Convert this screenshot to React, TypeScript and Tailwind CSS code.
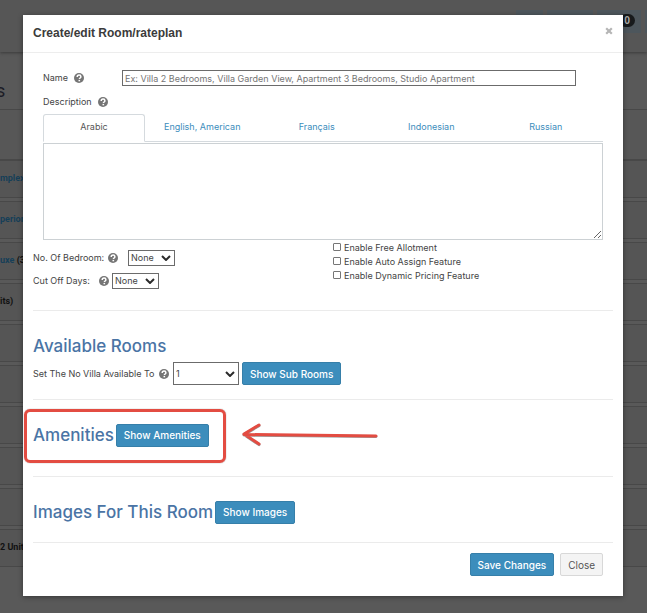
import { useState, type ReactNode } from "react";
import clsx from "clsx";

const languages = ["Arabic", "English, American", "Français", "Indonesian", "Russian"];

const features = [
    "Enable Free Allotment",
    "Enable Auto Assign Feature",
    "Enable Dynamic Pricing Feature",
];

const rows = [
    { link: "mplex" },
    { link: "perior" },
    { link: "uxe", note: " (3" },
    { note: "its)" },
    {},
    {},
    {},
    {},
    {},
    { note: "2 Unit" },
];

const HelpIcon = () => (
    <svg viewBox="0 0 10 10" className="size-[10px] shrink-0" aria-hidden="true">
        <circle cx="5" cy="5" r="5" fill="#757575" />
        <path d="M3.2 4C3.2 2.7 4 2.1 5.1 2.1c1 0 1.8.6 1.8 1.6 0 1.2-1.5 1.3-1.5 2.4" fill="none" stroke="#fff" strokeWidth="1.5" />
        <rect x="4.5" y="6.9" width="1.6" height="1.4" fill="#fff" />
    </svg>
);

interface SelectProps {
    id: string;
    value: string;
    className?: string;
}

const Select = ({ id, value, className }: SelectProps) => (
    <span className={clsx("relative inline-flex", className)}>
        <select id={id} className="w-full appearance-none border border-[#6b6b6b] bg-white pl-[2px] text-[9px] text-[#444]">
            <option>{value}</option>
        </select>
        <svg viewBox="0 0 10 6" className="pointer-events-none absolute right-1 top-1/2 h-[6px] w-[10px] -translate-y-1/2" aria-hidden="true">
            <path d="M1 1l4 4 4-4" fill="none" stroke="#2b2b2b" strokeWidth="2" />
        </svg>
    </span>
);

const PrimaryButton = ({ children, className }: { children: ReactNode; className?: string }) => (
    <button type="button" className={clsx("flex items-center justify-center whitespace-nowrap rounded-[2px] border border-[#367fa9] bg-[#3c8dbc] px-[7px] text-[10px] font-medium text-white", className)}>
        {children}
    </button>
);

const Heading = ({ children }: { children: ReactNode }) => (
    <h2 className="whitespace-nowrap text-[17px] leading-6 font-medium text-[#4a74a5]">{children}</h2>
);

const Backdrop = () => (
    <div className="min-h-screen bg-[#595959] font-[Roboto,sans-serif]" aria-hidden="true">
        <div className="flex h-[52px] justify-end gap-1 bg-[#565656] pt-[10px] shadow-[0_1px_3px_#3b3b3b]">
            <div className="h-[23px] w-[27px] bg-[#4d565c]" />
            <div className="h-[23px] w-[46px] bg-[#4d565c]" />
            <div className="flex h-[23px] w-[44px] items-start justify-end bg-[#4d565c] pr-[6px] pt-1">
                <span className="w-4 rounded-full bg-[#171a1c] text-center text-[10px] leading-[13px] font-bold text-[#aaa]">0</span>
            </div>
            <div className="h-[23px] w-[2px] bg-[#4d565c]" />
        </div>
        <div className="flex h-[57px] items-center pt-5 text-[18px] text-[#1c1c26]">
            <span className="-ml-1">s</span>
        </div>
        <div className="h-[51px] border-y border-[#484848] bg-[#575757]" />
        <div className="flex flex-col gap-[3px]">
            {rows.map((row, i) => (
                <div key={i} className="flex h-[38px] items-center whitespace-pre border-y border-[#484848] bg-[#555] text-[9px] font-bold text-[#111]">
                    {row.link && <span className="text-[#163f58]">{row.link}</span>}
                    {row.note}
                </div>
            ))}
        </div>
    </div>
);

const App = () => {
    const [active, setActive] = useState("Arabic");

    return (
        <div className="relative min-h-screen">
            <div className="absolute inset-0 overflow-hidden">
                <Backdrop />
            </div>
            <div className="relative py-[15px] pl-[23px] pr-6 font-[Inter,sans-serif] text-[9px] leading-[14px] text-[#444]">
                <div role="dialog" aria-labelledby="dialog-title" className="bg-white pb-5 shadow-[0_1px_5px_rgba(0,0,0,0.4)]">
                    <header className="flex h-[38px] items-center justify-between border-b border-[#ededed] px-[10px] pb-px">
                        <h1 id="dialog-title" className="font-['Liberation_Sans',sans-serif] text-[12px] font-bold text-[#3b3b3b]">Create/edit Room/rateplan</h1>
                        <button type="button" aria-label="Close dialog" className="pb-1">
                            <svg viewBox="0 0 8 8" className="size-2" aria-hidden="true">
                                <path d="M1.2 1.2l5.6 5.6M6.8 1.2L1.2 6.8" stroke="#b5b5b5" strokeWidth="2.2" />
                            </svg>
                        </button>
                    </header>

                    <div className="px-5 pt-[17px]">
                        <div className="flex h-4 items-center">
                            <div className="flex w-[79px] shrink-0 items-center gap-[6px]">
                                <label htmlFor="name">Name</label>
                                <HelpIcon />
                            </div>
                            <input
                                id="name"
                                type="text"
                                placeholder="Ex: Villa 2 Bedrooms, Villa Garden View, Apartment 3 Bedrooms, Studio Apartment"
                                className="mr-[27px] h-4 min-w-0 flex-1 border border-[#6b6b6b] px-[2px] placeholder:text-[#757575]"
                            />
                        </div>
                        <div className="flex items-center gap-[6px] pb-[5px] pt-[9px]">
                            <label htmlFor="description">Description</label>
                            <HelpIcon />
                        </div>
                        <div role="tablist" className="flex h-7 border-b border-[#d5dade]">
                            {languages.map((lang) => (
                                <button
                                    key={lang}
                                    type="button"
                                    role="tab"
                                    aria-selected={lang === active}
                                    onClick={() => setActive(lang)}
                                    className={clsx(
                                        "h-7 rounded-t-[3px] pb-[2px]",
                                        lang === active ? "w-[102px] border border-[#d5dade] border-b-white bg-white text-[#555]" : "flex-1 text-[#3c8dbc]"
                                    )}
                                >
                                    {lang}
                                </button>
                            ))}
                        </div>
                        <textarea id="description" className="mt-px block h-[97px] w-full resize-y border border-[#ccd1d4]" />
                    </div>

                    <div className="px-[10px]">
                        <div className="flex border-b border-[#ebebeb] pb-[21px]">
                            <div className="flex w-[300px] flex-col gap-[7px] pt-[10px]">
                                <div className="flex h-4 items-center">
                                    <label htmlFor="bedrooms" className="w-[75px] whitespace-nowrap">No. Of Bedroom:</label>
                                    <HelpIcon />
                                    <Select id="bedrooms" value="None" className="ml-[10px] h-4 w-[47px]" />
                                </div>
                                <div className="flex h-4 items-center">
                                    <label htmlFor="cutoff" className="w-[66px] whitespace-nowrap">Cut Off Days:</label>
                                    <HelpIcon />
                                    <Select id="cutoff" value="None" className="ml-[3px] h-4 w-[47px]" />
                                </div>
                            </div>
                            <div className="flex flex-col pt-px">
                                {features.map((feature) => (
                                    <label key={feature} className="flex h-[14px] items-center gap-[3px]">
                                        <input type="checkbox" className="mb-[2px] size-2 appearance-none rounded-[1px] border border-[#767676] checked:bg-[#3c8dbc]" />
                                        {feature}
                                    </label>
                                ))}
                            </div>
                        </div>

                        <section className="border-b border-[#ebebeb] pb-[14px] pt-[23px]">
                            <Heading>Available Rooms</Heading>
                            <div className="flex items-center pt-1">
                                <label htmlFor="villas" className="w-[126px] whitespace-nowrap">Set The No Villa Available To</label>
                                <HelpIcon />
                                <Select id="villas" value="1" className="ml-1 mr-[3px] h-[23px] w-[66px]" />
                                <PrimaryButton className="h-[23px]">Show Sub Rooms</PrimaryButton>
                            </div>
                        </section>

                        <section className="relative flex items-center gap-[2px] border-b border-[#ebebeb] pb-[29px] pt-[23px]">
                            <Heading>Amenities</Heading>
                            <PrimaryButton className="h-[23px]">Show Amenities</PrimaryButton>
                            <div className="pointer-events-none absolute -left-[9px] top-[9px] h-[54px] w-[202px] rounded-[6px] border-3 border-[#e34c42] shadow-[0_0_1px_#666]" />
                            <svg viewBox="0 0 138 26" className="pointer-events-none absolute left-[208px] top-[22px] h-[26px] w-[138px]" aria-hidden="true">
                                <path d="M18 3 L3 12 L18 22 M3 12.500 L135 14" fill="none" stroke="#999" strokeWidth="3" strokeLinecap="round" strokeLinejoin="round" transform="translate(0 .6)" />
                                <path d="M18 3 L3 12 L18 22 M3 12.500 L135 14" fill="none" stroke="#e34c42" strokeWidth="3" strokeLinecap="round" strokeLinejoin="round" />
                            </svg>
                        </section>

                        <section className="flex items-center gap-[2px] border-b border-[#ebebeb] pb-[18px] pt-[23px]">
                            <Heading>Images For This Room</Heading>
                            <PrimaryButton className="h-[23px]">Show Images</PrimaryButton>
                        </section>
                    </div>

                    <footer className="flex justify-end gap-[6px] px-5 pt-[10px]">
                        <PrimaryButton className="h-[23px]">Save Changes</PrimaryButton>
                        <button type="button" className="h-[23px] rounded-[2px] border border-[#d8d8d8] bg-[#f4f4f4] px-[7px] text-[10px] text-[#555]">Close</button>
                    </footer>
                </div>
            </div>
        </div>
    );
};

export default App;
